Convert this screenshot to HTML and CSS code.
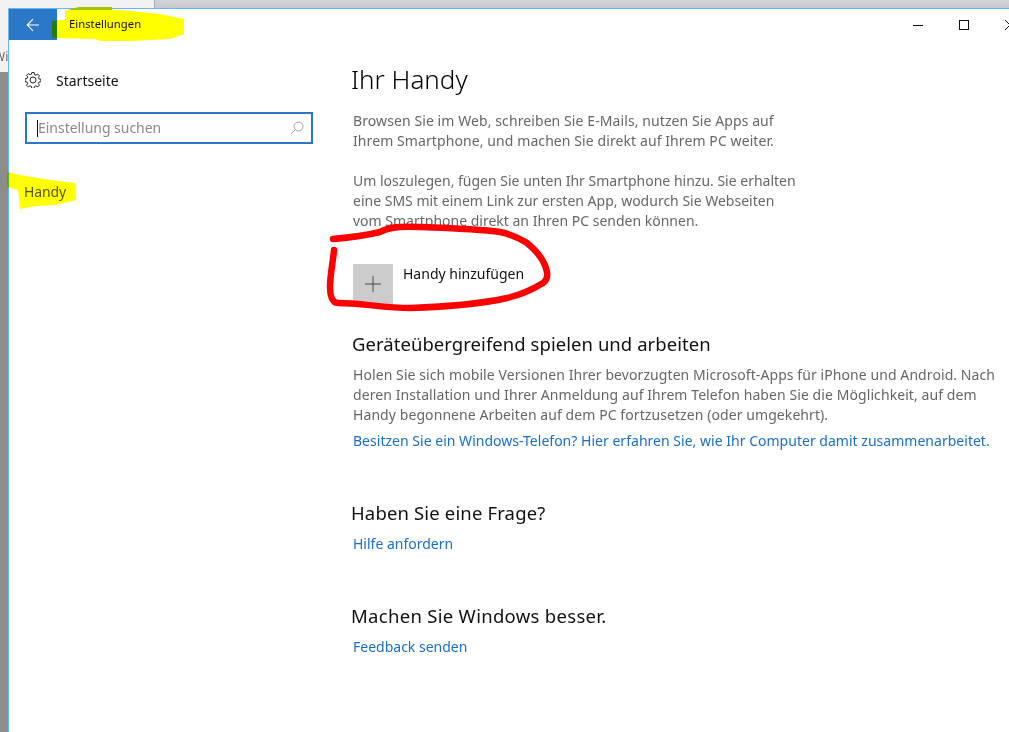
FILE: index.html
```html
<!DOCTYPE html>
<html lang="de">
<head>
<meta charset="utf-8">
<title>Einstellungen</title>
<link rel="stylesheet" href="styles.css">
</head>
<body>
<div class="desktop">
  <div class="topstrip"><div class="strip-light"></div><div class="strip-grey"></div></div>
  <div class="desk-row">
    <div class="gutter"><div class="gutter-light"><span class="gutter-text">Wi</span></div><div class="gutter-grey"></div></div>
    <div class="window">
      <header class="titlebar">
        <div class="back">
          <svg width="14" height="14" viewBox="0 0 14 14"><path d="M13 7H1.5M7 1.2 1.2 7 7 12.8" fill="none" stroke="#fff" stroke-width="1.1"/></svg>
        </div>
        <div class="apptitle">Einstellungen</div>
        <div class="controls">
          <svg class="ctl" width="10" height="10" viewBox="0 0 10 10"><path d="M0 5.5H10" stroke="#111" stroke-width="1"/></svg>
          <svg class="ctl" width="10" height="10" viewBox="0 0 10 10"><rect x=".5" y=".5" width="9" height="9" fill="none" stroke="#111" stroke-width="1"/></svg>
          <svg class="ctl" width="10" height="10" viewBox="0 0 10 10"><path d="M0 0 10 10M10 0 0 10" stroke="#111" stroke-width="1"/></svg>
        </div>
      </header>
      <div class="content">
        <aside class="sidebar">
          <div class="home">
            <svg width="16" height="16" viewBox="0 0 16 16"><path d="M6.8.6h2.4l.4 2 1.3.6 1.8-1.1 1.7 1.7-1.1 1.8.6 1.3 2 .4v2.400l-2 .4-.6 1.300 1.100 1.800-1.700 1.700-1.800-1.100-1.300.6-.4 2H6.800l-.4-2-1.300-.6-1.800 1.100-1.700-1.700 1.100-1.800-.6-1.300-2-.4V6.800l2-.4.6-1.300-1.100-1.800 1.700-1.700 1.800 1.100 1.300-.6z" fill="none" stroke="#222" stroke-width="1"/><circle cx="8" cy="8" r="3" fill="none" stroke="#222" stroke-width="1"/></svg>
            <span>Startseite</span>
          </div>
          <div class="search">
            <span class="caret"></span>
            <span class="placeholder">Einstellung suchen</span>
            <svg width="14" height="14" viewBox="0 0 14 14"><circle cx="8.500" cy="5.500" r="4.500" fill="none" stroke="#a0a0a0"/><path d="M5.200 8.800 .8 13.200" stroke="#a0a0a0" stroke-width="1"/></svg>
          </div>
          <div class="navitem">Handy</div>
        </aside>
        <main class="main">
          <h1>Ihr Handy</h1>
          <p class="first">Browsen Sie im Web, schreiben Sie E-Mails, nutzen Sie Apps auf<br>Ihrem Smartphone, und machen Sie direkt auf Ihrem PC weiter.</p>
          <p class="second">Um loszulegen, fügen Sie unten Ihr Smartphone hinzu. Sie erhalten<br>eine SMS mit einem Link zur ersten App, wodurch Sie Webseiten<br>vom Smartphone direkt an Ihren PC senden können.</p>
          <div class="addphone">
            <div class="plus"><svg width="16" height="16" viewBox="0 0 16 16"><path d="M8 0V16M0 8H16" stroke="#4a4a4a" stroke-width="1"/></svg></div>
            <span class="addlabel">Handy hinzufügen</span>
          </div>
          <h2 class="h-cross">Geräteübergreifend spielen und arbeiten</h2>
          <p class="third">Holen Sie sich mobile Versionen Ihrer bevorzugten Microsoft-Apps für iPhone und Android. Nach<br>deren Installation und Ihrer Anmeldung auf Ihrem Telefon haben Sie die Möglichkeit, auf dem<br>Handy begonnene Arbeiten auf dem PC fortzusetzen (oder umgekehrt).</p>
          <a class="link link-win">Besitzen Sie ein Windows-Telefon? Hier erfahren Sie, wie Ihr Computer damit zusammenarbeitet.</a>
          <h2 class="h-q">Haben Sie eine Frage?</h2>
          <a class="link link-help">Hilfe anfordern</a>
          <h2 class="h-better">Machen Sie Windows besser.</h2>
          <a class="link link-help">Feedback senden</a>
        </main>
      </div>
    </div>
  </div>
  <svg class="ink" width="1009" height="732" viewBox="0 0 1009 732">
    <path class="green" d="M52 21H57V38H52z"/>
    <path class="olive" d="M68 10 79 7H112V10z"/>
    <path class="yellow" d="M65 10H120L140 12 160 14 184 19V34L170 39 130 41H100L95 39 57 38V20H65z"/>
    <path class="yellow" d="M7 172 20 175 50 180 75 183 76 200 55 205 35 206 20 209 18 190 7 187z"/>
    <path class="red" d="M333 239C345 238 368 235 380 232C388 227 400 226 420 227C450 228 480 229 500 232C515 235 522 240 527 243C538 252 545 262 547 272C548 278 545 282 543 283C530 291 520 295 507 298C480 304 440 307 410 308C385 308 360 303 338 303C332 303 330 295 330 287C330 275 333 262 334 250"/>
  </svg>
</div>
</body>
</html>
```
FILE: styles.css
```css
* { box-sizing: border-box; }
html, body { margin: 0; padding: 0; }
body { width: 1009px; height: 732px; overflow: hidden; font-family: "Noto Sans", "Open Sans", sans-serif; background: #fff; }
.desktop { position: relative; width: 1009px; height: 732px; display: flex; flex-direction: column; overflow: hidden; }
.topstrip { display: flex; height: 8px; flex: none; }
.strip-light { width: 154px; background: #f2f2f2; }
.strip-grey { flex: 1; background: linear-gradient(#d2d4da, #c6c8ce); border-left: 1px solid #a8a8a8; }
.desk-row { display: flex; flex: 1; min-height: 0; }
.gutter { width: 8px; flex: none; display: flex; flex-direction: column; overflow: hidden; }
.gutter-light { height: 64px; background: #f2f2f2; padding-top: 41px; line-height: 16px; white-space: nowrap; }
.gutter-text { display: block; margin-left: -6px; font-size: 12px; color: #666; }
.gutter-grey { flex: 1; background: #8b8d8b; }
.window { flex: 1; min-width: 0; background: #fff; border-top: 1px solid #6db5ee; border-left: 1px solid #6db5ee; display: flex; flex-direction: column; }
.titlebar { display: flex; height: 31px; flex: none; }
.back { width: 48px; background: #2b78c9; display: flex; align-items: center; justify-content: center; }
.apptitle { margin-left: 12px; font-size: 11.300px; line-height: 30px; color: #111; }
.controls { margin-left: auto; display: flex; gap: 36px; margin-right: -6px; align-items: center; }
.ctl { flex: none; }
.content { display: flex; flex: 1; min-height: 0; }
.sidebar { width: 343px; flex: none; padding: 31px 0 0 16px; }
.home { display: flex; align-items: center; gap: 15px; height: 18px; font-size: 14px; color: #111; }
.search { width: 288px; height: 32px; margin-top: 23px; border: 2px solid #2b78c9; display: flex; align-items: center; padding: 0 7px 0 10px; }
.caret { width: 1px; height: 17px; background: #111; flex: none; }
.placeholder { flex: 1; font-size: 14px; line-height: 20px; letter-spacing: -.03px; color: #8a8a8a; }
.navitem { margin-top: 38px; margin-left: -1px; font-size: 14px; line-height: 20px; letter-spacing: -.1px; color: #555; }
.main { flex: 1; min-width: 0; white-space: nowrap; padding-top: 20px; }
h1 { margin: 0 0 0 -1px; font-size: 26px; font-weight: 300; line-height: 38px; color: #000; }
h2 { margin: 0; font-size: 18.500px; font-weight: 400; line-height: 26px; color: #111; }
p { margin: 0 0 0 1px; font-size: 14px; line-height: 20px; color: #666; }
.first { margin-top: 13px; letter-spacing: .09px; }
.second { margin-top: 20px; }
.addphone { display: flex; align-items: flex-start; gap: 10px; margin: 33px 0 0 1px; }
.plus { width: 40px; height: 40px; background: #ccc; display: flex; align-items: center; justify-content: center; }
.addlabel { font-size: 14px; line-height: 20px; color: #111; }
.h-cross { margin-top: 27px; letter-spacing: .05px; }
.third { margin-top: 8px; letter-spacing: .08px; }
.link { display: block; margin-left: 1px; font-size: 14px; line-height: 20px; color: #1a6fc4; }
.link-win { margin-top: 6px; letter-spacing: .02px; }
.h-q { margin: 49px 0 0 -1px; letter-spacing: .15px; }
.h-better { margin: 49px 0 0 -1px; letter-spacing: .3px; }
.link-help { margin-top: 8px; }
.ink { position: absolute; left: 0; top: 0; pointer-events: none; }
.yellow { fill: #ffff00; mix-blend-mode: multiply; }
.green { fill: #2b7a0b; }
.olive { fill: #a8c000; }
.red { fill: none; stroke: #ff0000; stroke-width: 6.500px; stroke-linecap: round; stroke-linejoin: round; }
```
